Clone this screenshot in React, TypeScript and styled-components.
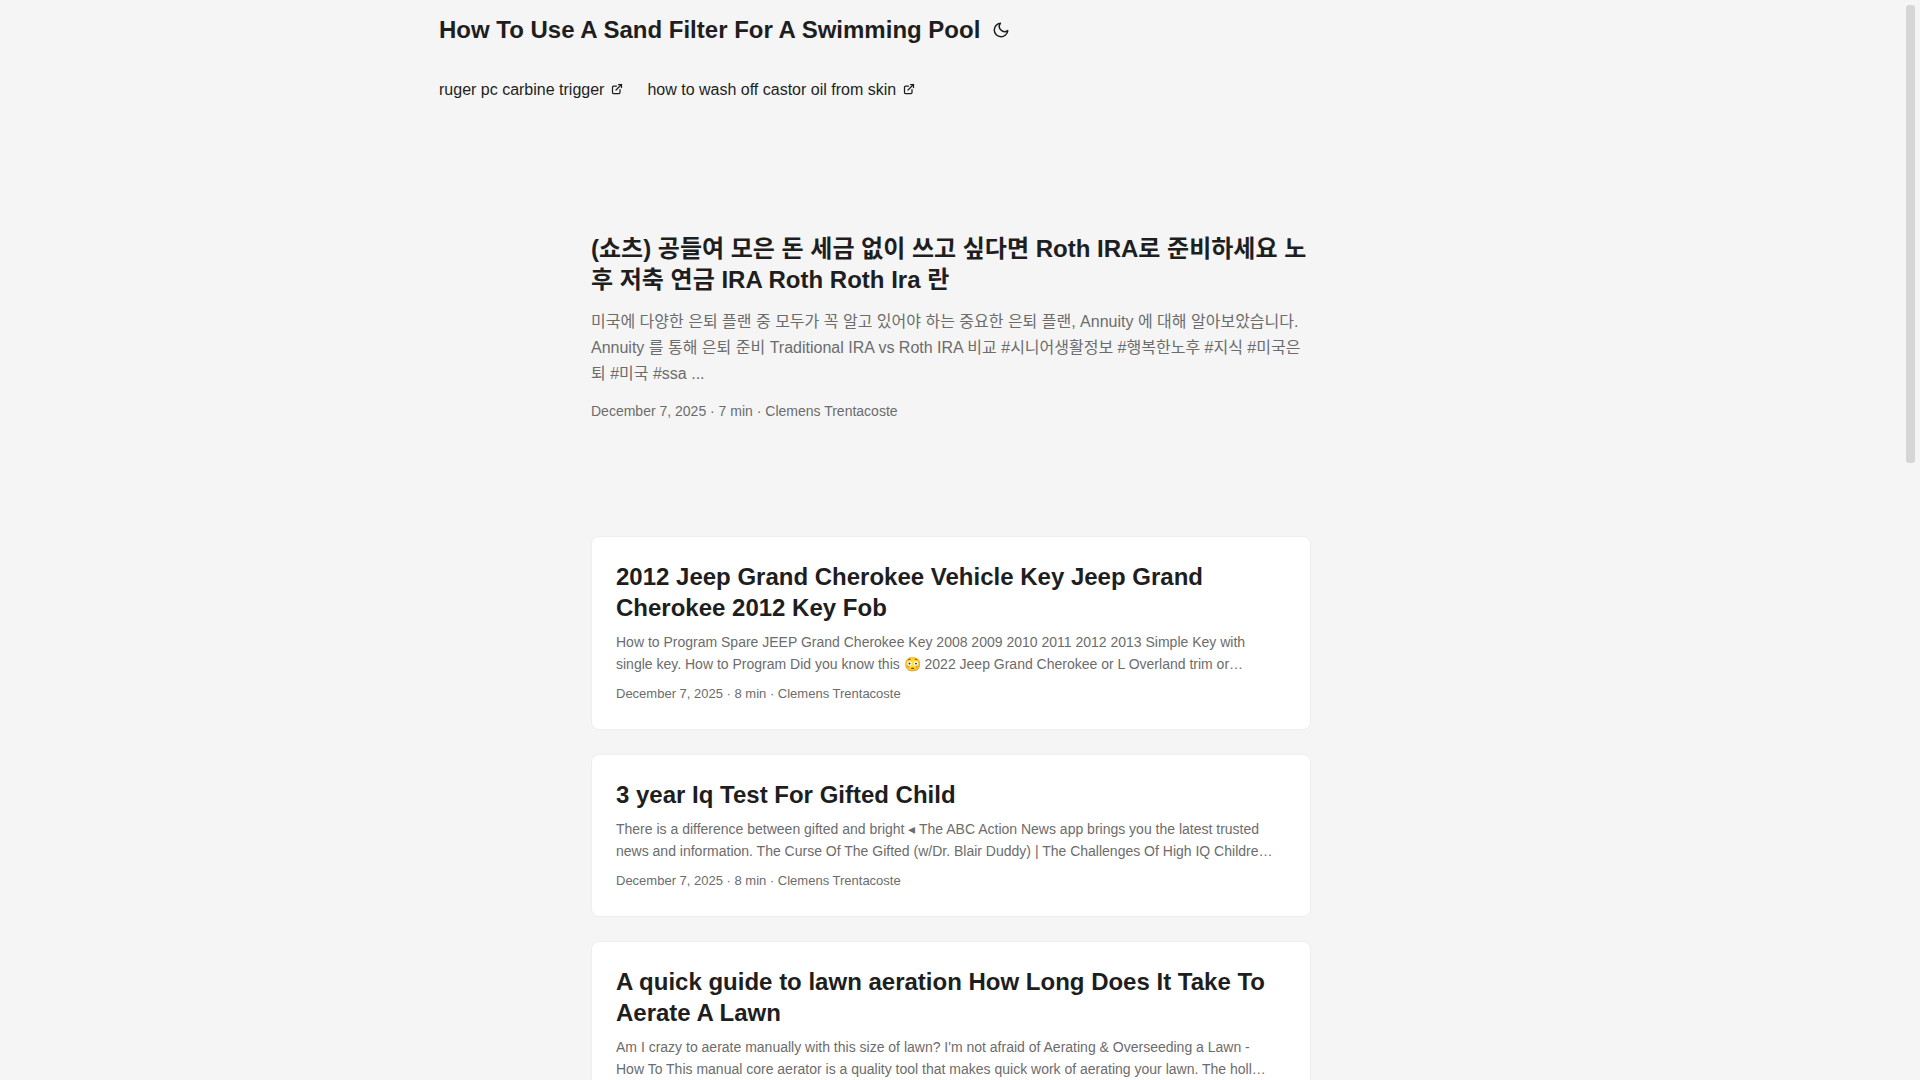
import React from "react";
import styled, { createGlobalStyle } from "styled-components";

const GlobalStyle = createGlobalStyle`
  *, *::before, *::after { box-sizing: border-box; }
  html { background: #f5f5f5; overflow: hidden; }
  body {
    margin: 0;
    font-family: "Liberation Sans", "Noto Sans CJK KR", sans-serif;
    font-size: 16px;
    line-height: 26px;
    color: #1e1e1e;
    background: #f5f5f5;
  }
  h1, h2, p { margin: 0; }
  a { color: inherit; text-decoration: none; }
`;

const Page = styled.div`
  height: 100vh;
  overflow: hidden;
  padding-right: 18px;
`;

const ScrollThumb = styled.div`
  position: fixed;
  top: 5px;
  right: 5px;
  width: 9px;
  height: 458px;
  border-radius: 3px;
  background: #d6d6d6;
`;

const Nav = styled.nav`
  display: flex;
  flex-direction: column;
  max-width: 1072px;
  margin: 0 auto;
  padding: 0 24px;
  line-height: 60px;
`;

const Brand = styled.div`
  display: flex;
  align-items: center;
  height: 60px;
`;

const Logo = styled.a`
  font-size: 24px;
  font-weight: 700;
`;

const ThemeToggle = styled.button`
  display: flex;
  margin: 0 4px;
  padding: 0 8px;
  border: 0;
  background: none;
  color: inherit;
  cursor: pointer;
`;

const Menu = styled.ul`
  display: flex;
  gap: 24px;
  margin: 0;
  padding: 0;
  list-style: none;
`;

const MenuLink = styled.a`
  display: flex;
  align-items: center;
  gap: 7px;

  svg {
    margin-bottom: 2px;
  }
`;

const Main = styled.main`
  max-width: 768px;
  margin: 0 auto;
  padding: 24px;
`;

const Title = styled.h2`
  font-size: 24px;
  line-height: 31px;
  font-weight: 700;
`;

const Featured = styled.article`
  display: flex;
  flex-direction: column;
  justify-content: center;
  min-height: 320px;
  margin: 24px 0 48px;
`;

const FeaturedSummary = styled.p`
  margin: 14px 0 12px;
  color: #6c6c6c;
`;

const Meta = styled.footer<{ $small?: boolean }>`
  font-size: ${(p) => (p.$small ? 13 : 14)}px;
  line-height: ${(p) => (p.$small ? 22 : 24)}px;
  color: #6c6c6c;
`;

const Card = styled.article`
  margin-bottom: 24px;
  padding: 24px;
  border: 1px solid #eee;
  border-radius: 8px;
  background: #fff;
`;

const Summary = styled.p`
  margin: 8px 0;
  padding-right: 8px;
  font-size: 14px;
  line-height: 22px;
  color: #6c6c6c;
`;

const MoonIcon = () => (
  <svg width="18" height="18" viewBox="0 0 24 24" fill="none" stroke="currentColor" strokeWidth="2" strokeLinecap="round" strokeLinejoin="round" aria-hidden="true">
    <path d="M21 12.79A9 9 0 1 1 11.21 3 7 7 0 0 0 21 12.79z" />
  </svg>
);

const ExternalIcon = () => (
  <svg width="12" height="12" viewBox="0 0 24 24" fill="none" stroke="currentColor" strokeWidth="2.5" strokeLinecap="round" strokeLinejoin="round" aria-hidden="true">
    <path d="M18 13v6a2 2 0 0 1-2 2H5a2 2 0 0 1-2-2V8a2 2 0 0 1 2-2h6" />
    <path d="M15 3h6v6" />
    <path d="M10 14L21 3" />
  </svg>
);

const links = ["ruger pc carbine trigger", "how to wash off castor oil from skin"];

const posts = [
  {
    title: "2012 Jeep Grand Cherokee Vehicle Key Jeep Grand Cherokee 2012 Key Fob",
    summary:
      "How to Program Spare JEEP Grand Cherokee Key 2008 2009 2010 2011 2012 2013 Simple Key with single key. How to Program Did you know this 😳 2022 Jeep Grand Cherokee or L Overland trim or…",
  },
  {
    title: "3 year Iq Test For Gifted Child",
    summary:
      "There is a difference between gifted and bright ◂ The ABC Action News app brings you the latest trusted news and information. The Curse Of The Gifted (w/Dr. Blair Duddy) | The Challenges Of High IQ Childre…",
  },
  {
    title: "A quick guide to lawn aeration How Long Does It Take To Aerate A Lawn",
    summary:
      "Am I crazy to aerate manually with this size of lawn? I'm not afraid of Aerating & Overseeding a Lawn - How To This manual core aerator is a quality tool that makes quick work of aerating your lawn. The holl…",
  },
];

export default function App() {
  return (
    <>
      <GlobalStyle />
      <Page>
        <header>
          <Nav>
            <Brand>
              <Logo href="#">How To Use A Sand Filter For A Swimming Pool</Logo>
              <ThemeToggle type="button" aria-label="Toggle theme">
                <MoonIcon />
              </ThemeToggle>
            </Brand>
            <Menu>
              {links.map((label) => (
                <li key={label}>
                  <MenuLink href="#">
                    {label}
                    <ExternalIcon />
                  </MenuLink>
                </li>
              ))}
            </Menu>
          </Nav>
        </header>
        <Main>
          <Featured>
            <Title as="h1">
              (쇼츠) 공들여 모은 돈 세금 없이 쓰고 싶다면 Roth IRA로 준비하세요 노후 저축 연금 IRA Roth Roth Ira 란
            </Title>
            <FeaturedSummary>
              미국에 다양한 은퇴 플랜 중 모두가 꼭 알고 있어야 하는 중요한 은퇴 플랜, Annuity 에 대해 알아보았습니다.
              Annuity 를 통해 은퇴 준비 Traditional IRA vs Roth IRA 비교 #시니어생활정보 #행복한노후 #지식 #미국은퇴 #미국
              #ssa ...
            </FeaturedSummary>
            <Meta>December 7, 2025 · 7 min · Clemens Trentacoste</Meta>
          </Featured>
          {posts.map((post) => (
            <Card key={post.title}>
              <Title>{post.title}</Title>
              <Summary>{post.summary}</Summary>
              <Meta $small>December 7, 2025 · 8 min · Clemens Trentacoste</Meta>
            </Card>
          ))}
        </Main>
      </Page>
      <ScrollThumb />
    </>
  );
}
